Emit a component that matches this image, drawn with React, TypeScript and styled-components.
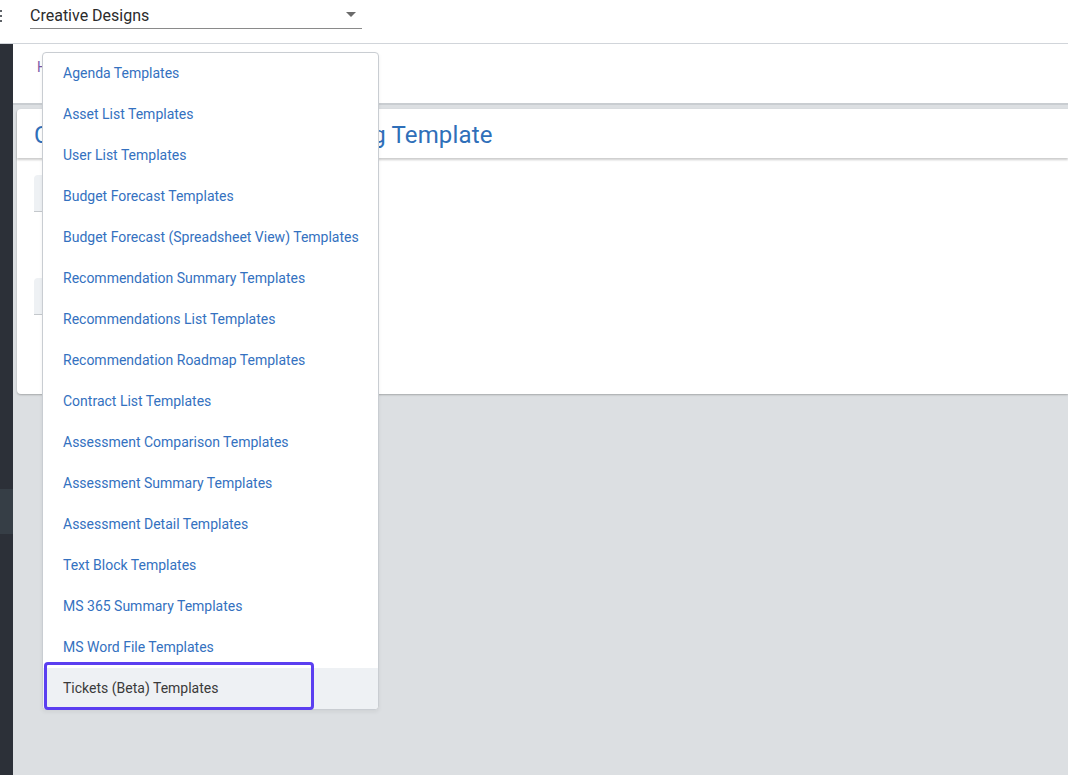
import React from "react";
import styled, { createGlobalStyle } from "styled-components";

const Global = createGlobalStyle`
  html, body { margin: 0; padding: 0; }
  body { font-family: Roboto, "Liberation Sans", Arial, sans-serif; background: #dcdfe2; }
  #root { width: 1068px; height: 775px; overflow: hidden; }
`;

const Page = styled.div`
  position: relative;
  width: 1068px;
  height: 775px;
  display: flex;
  flex-direction: column;
  background: #dcdfe2;
`;

const TopBar = styled.header`
  height: 44px;
  flex: 0 0 44px;
  box-sizing: border-box;
  background: #ffffff;
  border-bottom: 1px solid #d1d5da;
  display: flex;
  align-items: flex-start;
`;

const Kebab = styled.div`
  width: 30px;
  display: flex;
  flex-direction: column;
  gap: 3px;
  padding-top: 10px;
  span {
    display: block;
    width: 2px;
    height: 2px;
    background: #5f6368;
  }
`;

const SelectField = styled.div`
  width: 332px;
  height: 29px;
  box-sizing: border-box;
  border-bottom: 1px solid #8a8a8a;
  display: flex;
  align-items: center;
  justify-content: space-between;
  padding: 3px 6px 0 0;
  font-size: 16px;
  color: #2b2b2b;
`;

const Caret = styled.span`
  width: 0;
  height: 0;
  border-left: 5px solid transparent;
  border-right: 5px solid transparent;
  border-top: 5px solid #6b6b6b;
  margin-bottom: 3px;
`;

const Body = styled.div`
  flex: 1;
  display: flex;
`;

const Sidebar = styled.nav`
  width: 13px;
  flex: 0 0 13px;
  background: #2c3038;
  display: flex;
  flex-direction: column;
  padding-top: 445px;
`;

const SideActive = styled.div`
  height: 45px;
  background: #363e46;
`;

const Main = styled.main`
  flex: 1;
  display: flex;
  flex-direction: column;
`;

const Breadcrumb = styled.div`
  height: 61px;
  background: #ffffff;
  border-bottom: 2px solid #c9cdd1;
  padding: 15px 0 0 24px;
  box-sizing: border-box;
  font-size: 14px;
  color: #7a5aa6;
`;

const Card = styled.section`
  margin: 4px 0 0 4px;
  height: 285px;
  background: #ffffff;
  border-radius: 4px 0 0 4px;
  box-shadow: 0 1px 2px rgba(0, 0, 0, 0.25);
  display: flex;
  flex-direction: column;
`;

const CardHeader = styled.div`
  height: 49px;
  box-sizing: border-box;
  padding: 13px 0 0 17px;
  font-size: 24px;
  letter-spacing: 0.15px;
  line-height: 1.1;
  color: #2f6fb9;
  box-shadow: 0 2px 2px rgba(0, 0, 0, 0.2);
  white-space: nowrap;
`;

const CardBody = styled.div`
  padding: 17px 0 0 17px;
  display: flex;
  flex-direction: column;
  gap: 66px;
`;

const FilledInput = styled.div`
  width: 300px;
  height: 36px;
  background: #eef1f4;
  border-bottom: 1px solid #c4c8cc;
  border-radius: 4px 4px 0 0;
`;

const Menu = styled.ul`
  position: absolute;
  left: 42px;
  top: 52px;
  width: 335px;
  margin: 0;
  padding: 0;
  list-style: none;
  background: #ffffff;
  border: 1px solid #c9cdd2;
  border-radius: 4px;
  box-shadow: 0 2px 4px rgba(0, 0, 0, 0.06);
`;

const MenuItem = styled.li<{ $active?: boolean }>`
  position: relative;
  height: 41px;
  box-sizing: border-box;
  display: flex;
  align-items: center;
  padding: 0 0 2px 20px;
  font-size: 14px;
  color: ${(p) => (p.$active ? "#3a3a3a" : "#3471c0")};
  background: ${(p) => (p.$active ? "#eef1f4" : "transparent")};
  border-radius: ${(p) => (p.$active ? "0 0 4px 4px" : "0")};
`;

const FocusRing = styled.span`
  position: absolute;
  left: 1px;
  top: -6px;
  width: 270px;
  height: 48px;
  box-sizing: border-box;
  border: 3px solid #5b3ff0;
  border-radius: 4px;
  pointer-events: none;
`;

const items = [
  "Agenda Templates",
  "Asset List Templates",
  "User List Templates",
  "Budget Forecast Templates",
  "Budget Forecast (Spreadsheet View) Templates",
  "Recommendation Summary Templates",
  "Recommendations List Templates",
  "Recommendation Roadmap Templates",
  "Contract List Templates",
  "Assessment Comparison Templates",
  "Assessment Summary Templates",
  "Assessment Detail Templates",
  "Text Block Templates",
  "MS 365 Summary Templates",
  "MS Word File Templates",
  "Tickets (Beta) Templates",
];

export default function App() {
  return (
    <>
      <Global />
      <Page>
        <TopBar>
          <Kebab>
            <span />
            <span />
            <span />
          </Kebab>
          <SelectField>
            Creative Designs
            <Caret />
          </SelectField>
        </TopBar>
        <Body>
          <Sidebar>
            <SideActive />
          </Sidebar>
          <Main>
            <Breadcrumb>Home</Breadcrumb>
            <Card>
              <CardHeader>Create Business Review Meeting Template</CardHeader>
              <CardBody>
                <FilledInput />
                <FilledInput />
              </CardBody>
            </Card>
          </Main>
        </Body>
        <Menu>
          {items.map((t, i) => {
            const active = i === items.length - 1;
            return (
              <MenuItem key={t} $active={active}>
                {t}
                {active && <FocusRing />}
              </MenuItem>
            );
          })}
        </Menu>
      </Page>
    </>
  );
}
